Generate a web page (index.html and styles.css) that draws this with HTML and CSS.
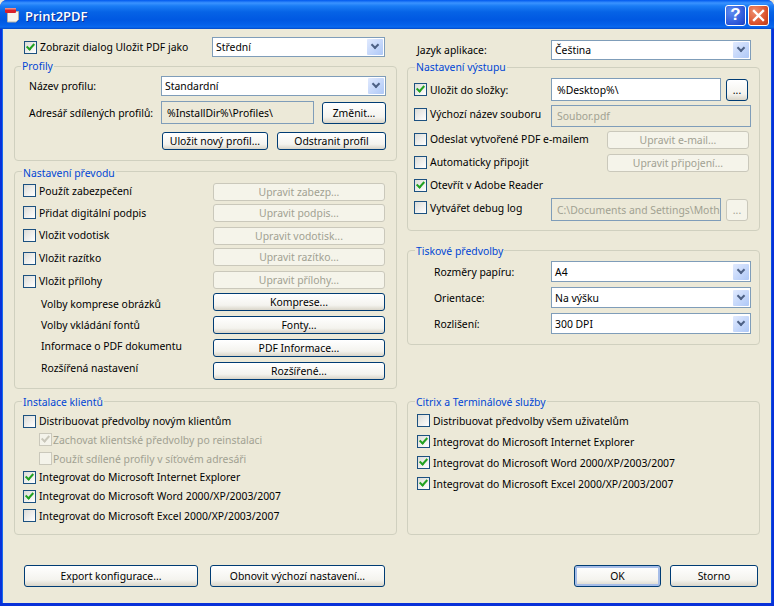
FILE: index.html
```html
<!DOCTYPE html>
<html lang="cs">
<head>
<meta charset="utf-8">
<title>Print2PDF</title>
<link rel="stylesheet" href="styles.css">
</head>
<body>
<div class="window">
  <div class="titlebar">
    <svg class="appicon" width="16" height="16" viewBox="0 0 16 16"><path d="M2.5 4.5h11v8l-2.5 2.500H2.500z" fill="#f6f4ec" stroke="#b4b2a8"/><rect x="0" y="1" width="11" height="5" rx="1" fill="#d8202a"/><rect x="0" y="1" width="11" height="1.500" fill="#f08a80"/></svg>
    <span class="title">Print2PDF</span>
    <span class="capbtn help">?</span>
    <span class="capbtn close"><svg width="13" height="13" viewBox="0 0 13 13"><path d="M2 2l9 9M11 2l-9 9" stroke="#fff" stroke-width="2.400" stroke-linecap="square"/></svg></span>
  </div>
  <div class="client">
    <div class="columns">
      <div class="col">
        <div class="row toprow">
          <label class="check on w-main"><i></i>Zobrazit dialog Uložit PDF jako</label>
          <div class="combo w173"><span>Střední</span><b></b></div>
        </div>
        <section class="group g-profily">
          <h2>Profily</h2>
          <div class="row h20"><span class="lab w132">Název profilu:</span><div class="combo w225"><span>Standardní</span><b></b></div></div>
          <div class="row h23 mt5"><span class="lab w132">Adresář sdílených profilů:</span><div class="field ro w153">%InstallDir%\Profiles\</div><button class="btn w64 tall ml8">Změnit...</button></div>
          <div class="row h18 mt8 ind133"><button class="btn w106">Uložit nový profil...</button><button class="btn w109 ml9">Odstranit profil</button></div>
        </section>
        <section class="group g-prevod">
          <h2>Nastavení převodu</h2>
          <div class="split">
            <div class="w190">
              <label class="check h21"><i></i>Použít zabezpečení</label>
              <label class="check h23"><i></i>Přidat digitální podpis</label>
              <label class="check h22"><i></i>Vložit vodotisk</label>
              <label class="check h24"><i></i>Vložit razítko</label>
              <label class="check h22"><i></i>Vložit přílohy</label>
              <div class="lab row h23 ind18">Volby komprese obrázků</div>
              <div class="lab row h20 ind18">Volby vkládání fontů</div>
              <div class="lab row h22 ind18">Informace o PDF dokumentu</div>
              <div class="lab row h22 ind18">Rozšířená nastavení</div>
            </div>
            <div class="btncol">
              <button class="btn w172" disabled>Upravit zabezp...</button>
              <button class="btn w172 mt3" disabled>Upravit podpis...</button>
              <button class="btn w172 mt5" disabled>Upravit vodotisk...</button>
              <button class="btn w172 mt3" disabled>Upravit razítko...</button>
              <button class="btn w172 mt5" disabled>Upravit přílohy...</button>
              <button class="btn w172 mt4">Komprese...</button>
              <button class="btn w172 mt5">Fonty...</button>
              <button class="btn w172 mt5">PDF Informace...</button>
              <button class="btn w172 mt5">Rozšířené...</button>
            </div>
          </div>
        </section>
        <section class="group g-klienti">
          <h2>Instalace klientů</h2>
          <label class="check h18"><i></i>Distribuovat předvolby novým klientům</label>
          <label class="check h19 off on sub"><i></i>Zachovat klientské předvolby po reinstalaci</label>
          <label class="check h19 off sub"><i></i>Použít sdílené profily v síťovém adresáři</label>
          <label class="check h18 on"><i></i>Integrovat do Microsoft Internet Explorer</label>
          <label class="check h20 on"><i></i>Integrovat do Microsoft Word 2000/XP/2003/2007</label>
          <label class="check h19"><i></i>Integrovat do Microsoft Excel 2000/XP/2003/2007</label>
        </section>
      </div>
      <div class="col col2">
        <div class="row langrow"><span class="lab w134">Jazyk aplikace:</span><div class="combo w200"><span>Čeština</span><b></b></div></div>
        <section class="group g-vystup">
          <h2>Nastavení výstupu</h2>
          <div class="row h23"><label class="check on w137"><i></i>Uložit do složky:</label><div class="field w170">%Desktop%\</div><button class="btn sq ml5">...</button></div>
          <div class="row h22 mt4"><label class="check w137 up2"><i></i>Výchozí název souboru</label><div class="field ro dim w200">Soubor.pdf</div></div>
          <div class="row h18 mt4"><label class="check w193 up1"><i></i>Odeslat vytvořené PDF e-mailem</label><button class="btn w142" disabled>Upravit e-mail...</button></div>
          <div class="row h18 mt5"><label class="check w193 up1"><i></i>Automaticky připojit</label><button class="btn w142" disabled>Upravit připojení...</button></div>
          <div class="row h20 mt3"><label class="check on"><i></i>Otevřít v Adobe Reader</label></div>
          <div class="row h23 mt3"><label class="check w137 up2"><i></i>Vytvářet debug log</label><div class="field ro dim w170">C:\Documents and Settings\Moth</div><button class="btn sq ml5" disabled>...</button></div>
        </section>
        <section class="group g-tisk">
          <h2>Tiskové předvolby</h2>
          <div class="row h21"><span class="lab w117">Rozměry papíru:</span><div class="combo w200"><span>A4</span><b></b></div></div>
          <div class="row h21 mt5"><span class="lab w117">Orientace:</span><div class="combo w200"><span>Na výšku</span><b></b></div></div>
          <div class="row h21 mt5"><span class="lab w117">Rozlišení:</span><div class="combo w200"><span>300 DPI</span><b></b></div></div>
        </section>
        <section class="group g-citrix">
          <h2>Citrix a Terminálové služby</h2>
          <label class="check h21"><i></i>Distribuovat předvolby všem uživatelům</label>
          <label class="check h21 on"><i></i>Integrovat do Microsoft Internet Explorer</label>
          <label class="check h21 on"><i></i>Integrovat do Microsoft Word 2000/XP/2003/2007</label>
          <label class="check h21 on"><i></i>Integrovat do Microsoft Excel 2000/XP/2003/2007</label>
        </section>
      </div>
    </div>
    <div class="footer">
      <button class="btn big w174">Export konfigurace...</button>
      <button class="btn big w175 ml12">Obnovit výchozí nastavení...</button>
      <button class="btn big w87 default push">OK</button>
      <button class="btn big w88 ml9">Storno</button>
    </div>
  </div>
</div>
</body>
</html>
```
FILE: styles.css
```css
* { box-sizing: border-box; }
html, body { margin: 0; padding: 0; background: #ece9d8; }
body { width: 774px; height: 606px; overflow: hidden; font: 10.4px "Noto Sans", Tahoma, sans-serif; color: #000; }
.window { width: 774px; height: 606px; display: flex; flex-direction: column; background: #0831d9; border-radius: 7px 7px 0 0; }
.titlebar { height: 29px; flex: none; display: flex; align-items: center; padding: 0 5px; border-radius: 7px 7px 0 0;
  background: linear-gradient(#0058ee 0, #3a93ff 3px, #1a7cf5 6px, #0663e6 12px, #0058e2 20px, #0561ea 25px, #0a6af0 27px, #0348c8 29px); }
.appicon { flex: none; margin-right: 4px; margin-top: 1px; }
.title { color: #fff; font: 600 13px "Open Sans", sans-serif; text-shadow: 1px 1px 0 #0f2f96; flex: 1; margin-top: 2px; }
.capbtn { width: 21px; height: 21px; border: 1px solid #fff; border-radius: 3px; display: flex; align-items: center; justify-content: center; margin-left: 2px; margin-top: 1px; color: #fff; font: bold 17px "Liberation Sans", sans-serif; }
.help { background: radial-gradient(circle at 30% 30%, #5f8df0, #2a55d8 70%, #1c3fb8); }
.close { background: radial-gradient(circle at 30% 30%, #ef8f6e, #d9502a 65%, #b93a15); }
.client { flex: 1; margin: 0 3px 3px; background: #ece9d8; padding: 8px 11px 0; display: flex; flex-direction: column; box-shadow: -1px 0 0 #166aee, 1px 0 0 #0a4fe0; }
.columns { display: flex; gap: 10px; height: 498px; }
.col { width: 383px; display: flex; flex-direction: column; }
.col2 { width: 353px; }
.row { display: flex; align-items: center; flex: none; }
.toprow { height: 20px; padding-left: 10px; }
.langrow { height: 20px; margin-top: 3px; padding-left: 10px; }
.w-main { width: 188px; }
.group { border: 1px solid #d0d0bf; border-radius: 4px; flex: none; }
.group h2 { margin: -7px 0 0 0; width: fit-content; font: inherit; color: #0046d5; background: #ece9d8; padding: 0 1px; line-height: 13px; }
.g-profily { height: 95px; margin-top: 9px; padding-left: 14px; }
.g-profily h2 { margin-left: -8px; margin-bottom: 3px; }
.g-prevod { height: 218px; margin-top: 10px; padding-left: 8px; }
.g-prevod h2 { margin-top: -5px; margin-left: -1px; }
.split { display: flex; }
.btncol { display: flex; flex-direction: column; padding-top: 3px; }
.g-klienti { height: 134px; margin-top: 12px; padding-left: 8px; }
.g-klienti h2 { margin-top: -6px; margin-left: -1px; margin-bottom: 3px; }
.g-vystup { height: 164px; margin-top: 7px; padding-left: 6px; }
.g-vystup h2 { margin-left: 1px; margin-bottom: 4px; }
.g-tisk { height: 95px; margin-top: 19px; padding-left: 26px; }
.g-tisk h2 { margin-top: -6px; margin-left: -19px; margin-bottom: 3px; }
.g-citrix { height: 134px; margin-top: 56px; padding-left: 9px; }
.g-citrix h2 { margin-top: -6px; margin-left: -2px; margin-bottom: 1px; }
.h18 { height: 18px; } .h19 { height: 19px; } .h20 { height: 20px; } .h21 { height: 21px; } .h22 { height: 22px; } .h23 { height: 23px; } .h24 { height: 24px; }
.mt3 { margin-top: 3px; } .mt4 { margin-top: 4px; } .mt5 { margin-top: 5px; } .mt8 { margin-top: 8px; }
.ml5 { margin-left: 5px; } .ml8 { margin-left: 8px; } .ml9 { margin-left: 9px; } .ml12 { margin-left: 12px; }
.up1 { margin-bottom: 2px; } .up2 { margin-bottom: 4px; }
.ind133 { padding-left: 133px; }
.ind18 { padding-left: 18px; }
.lab { flex: none; white-space: nowrap; }
.w117 { width: 117px; } .w132 { width: 132px; } .w134 { width: 134px; } .w137 { width: 137px; } .w190 { width: 190px; flex: none; } .w193 { width: 193px; }
.w64 { width: 64px; } .w106 { width: 106px; } .w109 { width: 109px; } .w142 { width: 142px; } .w153 { width: 153px; }
.w170 { width: 170px; } .w172 { width: 172px; } .w173 { width: 173px; } .w174 { width: 174px; } .w175 { width: 175px; } .w200 { width: 200px; } .w225 { width: 225px; } .w87 { width: 87px; } .w88 { width: 88px; }
.check { display: flex; align-items: center; flex: none; white-space: nowrap; }
.check i { width: 13px; height: 13px; flex: none; margin-right: 3px; border: 1px solid #1c5180; background: linear-gradient(135deg, #dcdcd7, #fff); position: relative; }
.check.on i::after { content: ""; position: absolute; left: 3px; top: 0; width: 3px; height: 6px; transform: rotate(42deg); border: solid #21a121; border-width: 0 2px 2px 0; }
.check.off { color: #a1a192; }
.check.off i { border-color: #cac8bb; background: #f4f3ea; }
.check.off.on i::after { border-color: #c9c7ba; }
.sub { padding-left: 16px; }
.sub i { margin-right: 1px; }
.combo { height: 20px; flex: none; display: flex; align-items: center; justify-content: space-between; border: 1px solid #7f9db9; background: #fff; padding: 1px 1px 1px 3px; }
.h21 > .combo { height: 21px; }
.combo b { width: 16px; height: 16px; flex: none; border-radius: 1px; background: linear-gradient(135deg, #e1eafe, #aec8f7); position: relative; }
.combo b::after { content: ""; position: absolute; left: 5px; top: 3px; width: 4px; height: 4px; transform: rotate(45deg); border: solid #4d6185; border-width: 0 2px 2px 0; }
.field { height: 100%; flex: none; display: flex; align-items: center; border: 1px solid #7f9db9; background: #fff; padding: 0 5px; white-space: nowrap; overflow: hidden; }
.ro { background: #ece9d8; }
.dim { color: #a1a192; }
.btn { height: 18px; flex: none; padding: 0; font: inherit; color: #000; border: 1px solid #003c74; border-radius: 3px; background: linear-gradient(#fff, #f4f3ee 70%, #d9d5c9); white-space: nowrap; }
.tall { height: 22px; }
.btn:disabled { color: #a1a192; border-color: #cac8bb; background: #f5f4ea; }
.sq { width: 22px; height: 22px; }
.big { height: 22px; }
.footer { display: flex; margin-top: 30px; padding-left: 10px; padding-right: 2px; }
.push { margin-left: auto; }
.default { box-shadow: inset 0 0 0 2px #a6bde8; }
```
